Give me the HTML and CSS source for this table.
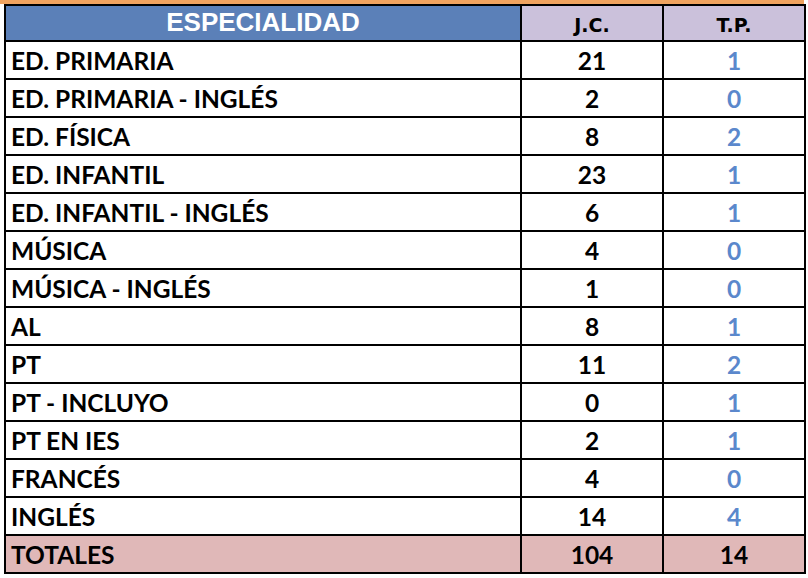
FILE: index.html
```html
<!DOCTYPE html>
<html lang="es">
<head>
<meta charset="utf-8">
<title>Especialidad</title>
<link rel="stylesheet" href="styles.css">
</head>
<body>
<div class="sheet">
  <div class="strip"></div>
  <div class="grid">
    <div class="cell head-main">ESPECIALIDAD</div>
    <div class="cell head-sub">J.C.</div>
    <div class="cell head-sub">T.P.</div>

    <div class="cell name">ED. PRIMARIA</div><div class="cell num">21</div><div class="cell num tp">1</div>
    <div class="cell name">ED. PRIMARIA - INGLÉS</div><div class="cell num">2</div><div class="cell num tp">0</div>
    <div class="cell name">ED. FÍSICA</div><div class="cell num">8</div><div class="cell num tp">2</div>
    <div class="cell name">ED. INFANTIL</div><div class="cell num">23</div><div class="cell num tp">1</div>
    <div class="cell name">ED. INFANTIL - INGLÉS</div><div class="cell num">6</div><div class="cell num tp">1</div>
    <div class="cell name">MÚSICA</div><div class="cell num">4</div><div class="cell num tp">0</div>
    <div class="cell name">MÚSICA - INGLÉS</div><div class="cell num">1</div><div class="cell num tp">0</div>
    <div class="cell name">AL</div><div class="cell num">8</div><div class="cell num tp">1</div>
    <div class="cell name">PT</div><div class="cell num">11</div><div class="cell num tp">2</div>
    <div class="cell name">PT - INCLUYO</div><div class="cell num">0</div><div class="cell num tp">1</div>
    <div class="cell name">PT EN IES</div><div class="cell num">2</div><div class="cell num tp">1</div>
    <div class="cell name">FRANCÉS</div><div class="cell num">4</div><div class="cell num tp">0</div>
    <div class="cell name">INGLÉS</div><div class="cell num">14</div><div class="cell num tp">4</div>

    <div class="cell name total">TOTALES</div><div class="cell num total">104</div><div class="cell num total">14</div>
  </div>
</div>
</body>
</html>
```

FILE: styles.css
```css
html, body {
  margin: 0;
  padding: 0;
  background: #ffffff;
}

.sheet {
  width: 808px;
  height: 578px;
  overflow: hidden;
}

.strip {
  width: 804px;
  height: 4px;
  background: #f0a35f;
}

.grid {
  margin-left: 4px;
  width: 802px;
  display: grid;
  grid-template-columns: 514px 140px 140px;
  grid-template-rows: 34px repeat(14, 36px);
  gap: 2px;
  padding: 2px;
  box-sizing: border-box;
  background: #000000;
  font-family: Lato, "Open Sans", sans-serif;
  font-weight: 700;
}

.cell {
  background: #ffffff;
  display: flex;
  align-items: flex-end;
  color: #000000;
  font-size: 24.5px;
  line-height: 25px;
  padding-bottom: 5px;
  box-sizing: border-box;
  white-space: nowrap;
}

.name {
  padding-left: 5px;
}

.num {
  justify-content: center;
}

.tp {
  color: #5b88cc;
}

.head-main {
  background: #5b80b8;
  color: #ffffff;
  justify-content: center;
  font-family: "Liberation Sans", Arial, sans-serif;
  font-size: 26px;
  line-height: 26px;
  padding-bottom: 5px;
}

.head-sub {
  background: #cbc1db;
  justify-content: center;
  font-family: "DejaVu Sans", sans-serif;
  font-size: 19px;
  line-height: 19px;
  padding-bottom: 5px;
}

.total {
  background: #e0b8b8;
}
```
